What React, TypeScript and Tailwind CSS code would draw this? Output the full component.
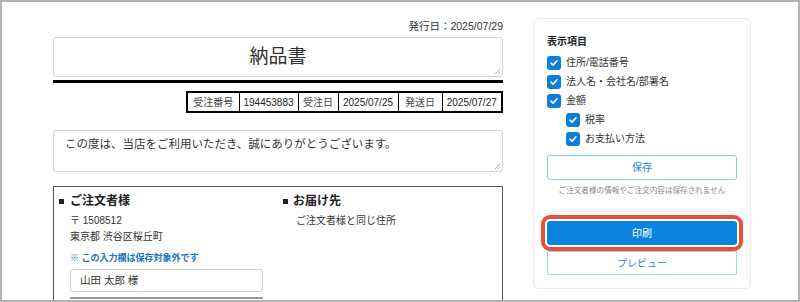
import React from "react";

const jp = { fontFamily: '"Liberation Sans", "Noto Sans CJK JP", sans-serif' };

function Check({ label, indent }: { label: string; indent?: boolean }) {
  return (
    <div className={`flex items-center h-[19px] ${indent ? "pl-[19px]" : ""}`}>
      <span className="w-[14px] h-[14px] rounded-[3px] bg-[#0b7fdb] flex items-center justify-center">
        <svg width="10" height="10" viewBox="0 0 10 10">
          <path d="M2 5.2 L4.1 7.2 L8 2.8" stroke="white" strokeWidth="1.6" fill="none" strokeLinecap="round" strokeLinejoin="round" />
        </svg>
      </span>
      <span className="ml-[5px] text-[10px] text-[#333]">{label}</span>
    </div>
  );
}

function Grip() {
  return (
    <svg className="absolute right-[1px] bottom-[1px]" width="7" height="7" viewBox="0 0 7 7">
      <path d="M6 1 L1 6 M6 4 L4 6" stroke="#999" strokeWidth="0.8" />
    </svg>
  );
}

export default function App() {
  return (
    <div style={jp} className="w-[800px] h-[302px] border-2 border-[#b3b3b3] bg-white overflow-hidden flex items-start text-[#222]">
      <div className="w-[450px] shrink-0 ml-[51px] pt-[17px]">
        <div className="text-right text-[10.5px] leading-[14px] text-[#333]">発行日：2025/07/29</div>
        <div className="mt-[4px] h-[40px] border border-[#d4d4d4] rounded-[3px] flex items-center justify-center text-[19px] text-[#333] relative">
          納品書
          <Grip />
        </div>
        <div className="mt-[3px] h-[3px] bg-black" />
        <div className="mt-[8px] flex justify-end">
          <table className="border-collapse border-2 border-black text-[10px] text-[#222] table-fixed">
            <tbody>
              <tr className="h-[20px]">
                <td className="border border-black w-[52px] text-center text-[#444]">受注番号</td>
                <td className="border border-black w-[59px] text-center">194453883</td>
                <td className="border border-black w-[40px] text-center text-[#444]">受注日</td>
                <td className="border border-black w-[60px] text-center">2025/07/25</td>
                <td className="border border-black w-[44px] text-center text-[#444]">発送日</td>
                <td className="border border-black w-[60px] text-center">2025/07/27</td>
              </tr>
            </tbody>
          </table>
        </div>
        <div className="mt-[17px] h-[42px] border border-[#d4d4d4] rounded-[3px] pl-[11px] pt-[5px] text-[11.5px] text-[#333] relative">
          この度は、当店をご利用いただき、誠にありがとうございます。
          <Grip />
        </div>
        <div className="mt-[14px] border border-[#555] grid grid-cols-2 h-[140px]">
          <div className="pl-[5px] pt-[6px]">
            <div className="flex items-center text-[12px] font-bold leading-[16px]">
              <span className="w-[5px] h-[5px] bg-[#222] mr-[6px]" />
              ご注文者様
            </div>
            <div className="pl-[11px] mt-[4px] text-[10px] leading-[16px] text-[#333]">〒 1508512</div>
            <div className="pl-[11px] text-[10px] leading-[16px] text-[#333]">東京都 渋谷区桜丘町</div>
            <div className="pl-[11px] mt-[7px] text-[9px] font-bold leading-[12px] text-[#1a73c8]">※ この入力欄は保存対象外です</div>
            <div className="ml-[11px] mt-[5px] w-[193px] h-[23px] border border-[#cfcfcf] rounded-[3px] flex items-center px-[9px] text-[10.5px] text-[#333]">
              山田 太郎 様
            </div>
            <div className="ml-[11px] mt-[5px] w-[193px] h-[2px] bg-[#9a9a9a]" />
          </div>
          <div className="pl-[5px] pt-[6px]">
            <div className="flex items-center text-[12px] font-bold leading-[16px]">
              <span className="w-[5px] h-[5px] bg-[#222] mr-[5px]" />
              お届け先
            </div>
            <div className="pl-[13px] mt-[4px] text-[10px] leading-[16px] text-[#333]">ご注文者様と同じ住所</div>
          </div>
        </div>
      </div>
      <div className="ml-[30px] mt-[16px] w-[218px] h-[271px] shrink-0 border border-[#ececec] rounded-[6px] px-[13px] pt-[16px]">
        <div className="text-[10px] font-bold leading-[14px] text-[#222]">表示項目</div>
        <div className="mt-[4px] flex flex-col">
          <Check label="住所/電話番号" />
          <Check label="法人名・会社名/部署名" />
          <Check label="金額" />
          <Check label="税率" indent />
          <Check label="お支払い方法" indent />
        </div>
        <div className="mt-[7px] h-[25px] border border-[#8cc4f2] rounded-[3px] flex items-center justify-center text-[10px] text-[#2a8ae0]">
          保存
        </div>
        <div className="mt-[5px] text-center text-[7.6px] text-[#888] leading-[12px]">ご注文者様の情報やご注文内容は保存されません</div>
        <div className="mt-[14px] h-px bg-[#f0f0f0]" />
        <div className="mt-[9px] h-[24px] rounded-[3px] bg-[#0b84e0] flex items-center justify-center text-[10px] text-white outline-[4px] outline-solid outline-[#e8503a] outline-offset-[2px]">
          印刷
        </div>
        <div className="mt-[6px] h-[24px] border border-[#a9d2f3] rounded-[1px] flex items-center justify-center text-[10px] text-[#2a8ae0]">
          プレビュー
        </div>
      </div>
    </div>
  );
}
